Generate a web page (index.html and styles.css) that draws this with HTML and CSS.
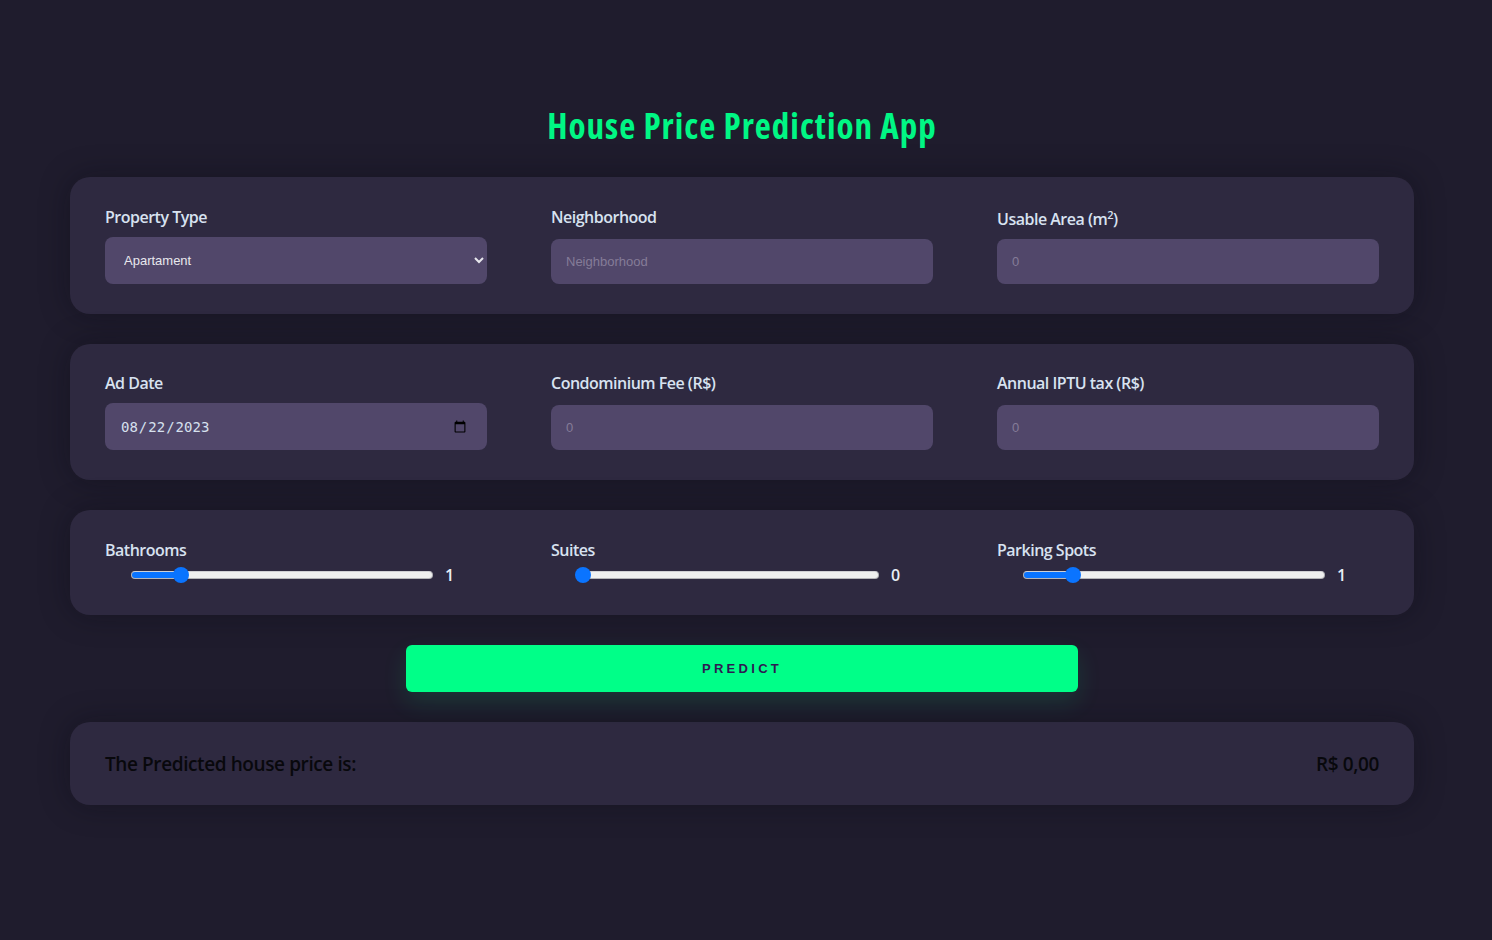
FILE: index.html
```html
<!DOCTYPE html>
<html lang="en">
<head>
<meta charset="utf-8">
<title>House Price Prediction App</title>
<link rel="stylesheet" href="styles.css">
</head>
<body>
<main class="app">
  <h1 class="title">House Price Prediction App</h1>

  <section class="card">
    <div class="field">
      <label class="label" for="ptype">Property Type</label>
      <select id="ptype" class="control select">
        <option>Apartament</option>
        <option>House</option>
      </select>
    </div>
    <div class="field">
      <label class="label" for="hood">Neighborhood</label>
      <input id="hood" class="control input" type="text" placeholder="Neighborhood">
    </div>
    <div class="field">
      <label class="label label-sup" for="area">Usable Area (m<sup>2</sup>)</label>
      <input id="area" class="control input" type="number" placeholder="0">
    </div>
  </section>

  <section class="card card-tight">
    <div class="field">
      <label class="label" for="date">Ad Date</label>
      <input id="date" class="control date" type="date" value="2023-08-22">
    </div>
    <div class="field">
      <label class="label" for="condo">Condominium Fee (R$)</label>
      <input id="condo" class="control input" type="number" placeholder="0">
    </div>
    <div class="field">
      <label class="label" for="iptu">Annual IPTU tax (R$)</label>
      <input id="iptu" class="control input" type="number" placeholder="0">
    </div>
  </section>

  <section class="card card-sliders">
    <div class="field">
      <label class="label" for="bath">Bathrooms</label>
      <div class="slider-row">
        <input id="bath" class="range" type="range" min="0" max="7" value="1" style="--fill: 14.3%">
        <span class="range-value">1</span>
      </div>
    </div>
    <div class="field">
      <label class="label" for="suites">Suites</label>
      <div class="slider-row">
        <input id="suites" class="range" type="range" min="0" max="7" value="0" style="--fill: 0%">
        <span class="range-value">0</span>
      </div>
    </div>
    <div class="field">
      <label class="label" for="park">Parking Spots</label>
      <div class="slider-row">
        <input id="park" class="range" type="range" min="0" max="7" value="1" style="--fill: 14.3%">
        <span class="range-value">1</span>
      </div>
    </div>
  </section>

  <div class="actions">
    <button class="predict" type="button">PREDICT</button>
  </div>

  <section class="card result">
    <span class="result-label">The Predicted house price is:</span>
    <span class="result-value">R$ 0,00</span>
  </section>
</main>
</body>
</html>
```

FILE: styles.css
```css
* { box-sizing: border-box; }

html, body {
  margin: 0;
  background: #1f1c2d;
}

body {
  font-family: "Open Sans", "Noto Sans", sans-serif;
  min-height: 940px;
}

.app {
  padding: 104px 78px 60px 70px;
}

.title {
  margin: 0 0 29px;
  text-align: center;
  font-family: "Open Sans", sans-serif;
  font-stretch: 75%;
  font-weight: 700;
  font-size: 35px;
  line-height: 44px;
  letter-spacing: 1px;
  color: #00f784;
}

.card {
  background: #2e2940;
  border-radius: 20px;
  padding: 30px 35px;
  display: grid;
  grid-template-columns: repeat(3, 1fr);
  column-gap: 64px;
  margin-bottom: 30px;
  box-shadow: 0 0 30px rgba(10, 8, 18, 0.35);
}

.card-tight {
  padding-top: 29px;
}

.field {
  display: flex;
  flex-direction: column;
}

.label {
  font-size: 16px;
  font-weight: 600;
  line-height: 20px;
  letter-spacing: -0.5px;
  color: #d8e2f0;
  margin-bottom: 10px;
}

.label-sup {
  padding-top: 2px;
}

.label sup {
  font-size: 11px;
  line-height: 0;
}

.control {
  margin-top: auto;
  width: 100%;
  border: none;
  outline: none;
  border-radius: 8px;
  background: #51476a;
  color: #e4e4ea;
  font-family: "Liberation Sans", Arial, sans-serif;
  font-size: 13px;
}

.select {
  height: 47px;
  padding: 0 10px 0 15px;
  color: #e8e8ee;
}

.input {
  height: 45px;
  padding: 0 15px;
}

.input::placeholder {
  color: #857c98;
}

.input::-webkit-outer-spin-button,
.input::-webkit-inner-spin-button {
  -webkit-appearance: none;
  margin: 0;
}

.date {
  height: 47px;
  padding: 0 18px 0 15px;
  font-family: "DejaVu Sans Mono", monospace;
  font-size: 14px;
  color: #d6e0ee;
}

.card-sliders .label {
  margin-bottom: 5px;
}

.slider-row {
  display: flex;
  align-items: center;
  height: 20px;
  padding-left: 26px;
}

.range {
  -webkit-appearance: none;
  appearance: none;
  width: 302px;
  height: 16px;
  margin: 0;
  background: transparent;
}

.range::-webkit-slider-runnable-track {
  height: 8px;
  border-radius: 4px;
  background: linear-gradient(to right, #0a74ff 0, #0a74ff var(--fill), #efefef var(--fill), #efefef 100%);
  border: 1px solid #b4b4b8;
  border-top-color: #d0d0d4;
}

.range::-webkit-slider-thumb {
  -webkit-appearance: none;
  width: 16px;
  height: 16px;
  margin-top: -5px;
  border-radius: 50%;
  background: #0a74ff;
  border: none;
}

#suites::-webkit-slider-thumb {
  margin-left: -3px;
}

.range-value {
  margin-left: 12px;
  font-size: 16px;
  font-weight: 600;
  color: #e8eef6;
}

.actions {
  display: flex;
  justify-content: center;
  margin-bottom: 30px;
}

.predict {
  width: 672px;
  height: 47px;
  border: none;
  border-radius: 6px;
  background: #00ff88;
  color: #2e1a52;
  font-family: "Liberation Sans", Arial, sans-serif;
  font-weight: 700;
  font-size: 13px;
  letter-spacing: 3.3px;
  box-shadow: 0 10px 25px rgba(0, 255, 136, 0.12);
  cursor: pointer;
}

.result {
  display: flex;
  justify-content: space-between;
  align-items: center;
  height: 83px;
  padding: 0 35px;
}

.result-label,
.result-value {
  font-size: 19px;
  font-weight: 600;
  letter-spacing: -0.4px;
  color: #08080c;
}
```
